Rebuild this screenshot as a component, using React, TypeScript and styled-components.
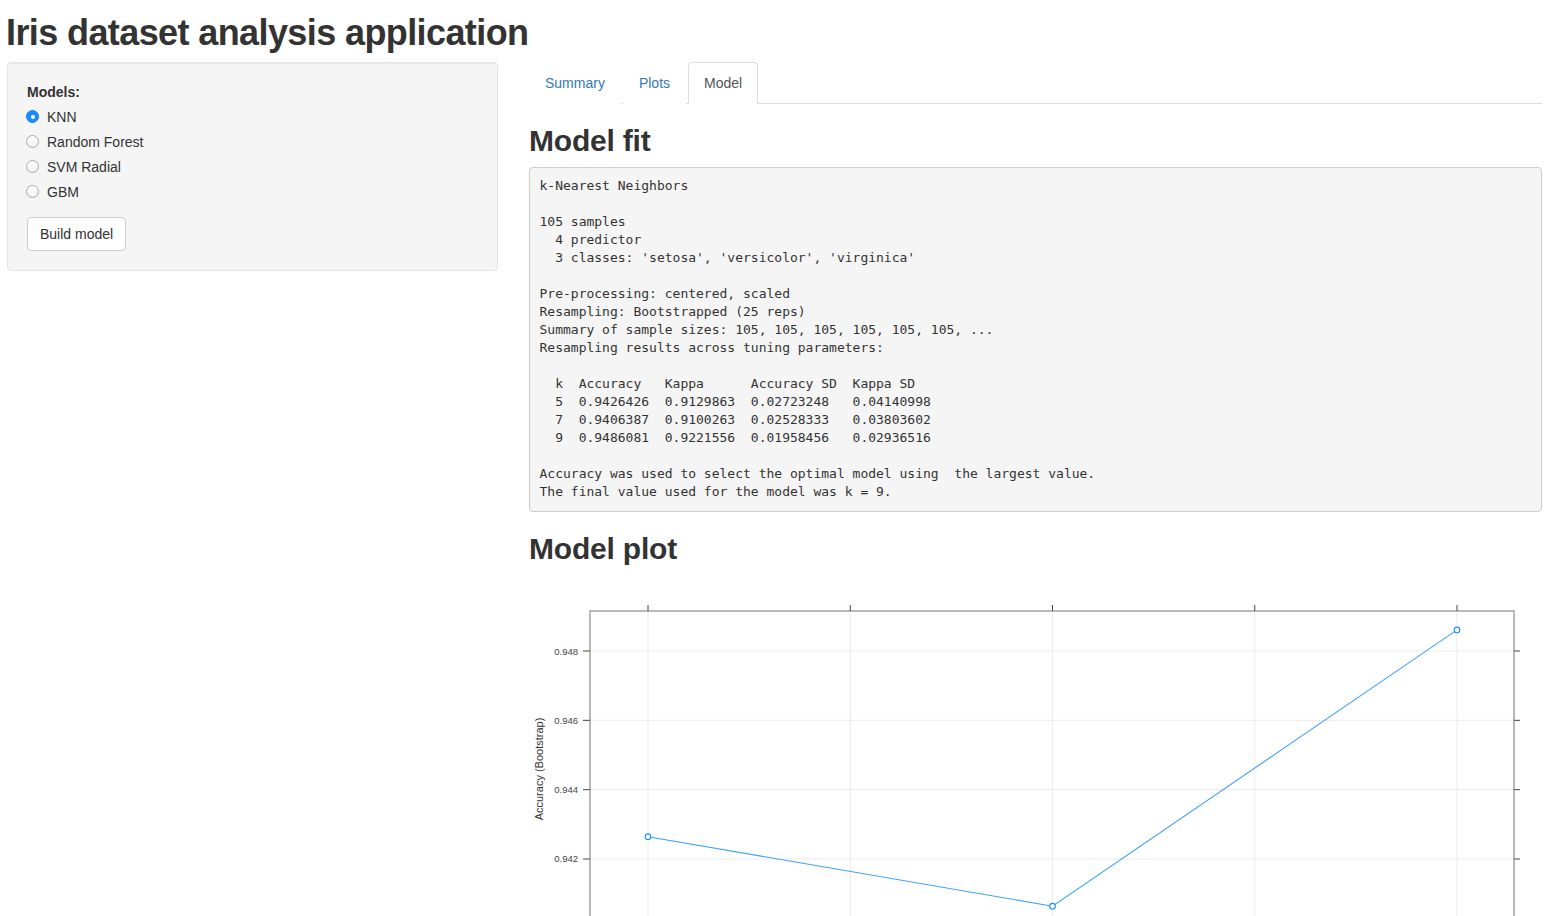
import styled, { createGlobalStyle } from 'styled-components'

const GlobalStyle = createGlobalStyle`
  html, body { margin: 0; padding: 0; background: #fff; }
  body {
    font-family: "Liberation Sans", Arial, sans-serif;
    font-size: 14px;
    line-height: 1.42857;
    color: #333;
  }
  * { box-sizing: border-box; }
`

const models = ['KNN', 'Random Forest', 'SVM Radial', 'GBM']
const tabs = ['Summary', 'Plots', 'Model']

const fitText = `k-Nearest Neighbors

105 samples
  4 predictor
  3 classes: 'setosa', 'versicolor', 'virginica'

Pre-processing: centered, scaled
Resampling: Bootstrapped (25 reps)
Summary of sample sizes: 105, 105, 105, 105, 105, 105, ...
Resampling results across tuning parameters:

  k  Accuracy   Kappa      Accuracy SD  Kappa SD  
  5  0.9426426  0.9129863  0.02723248   0.04140998
  7  0.9406387  0.9100263  0.02528333   0.03803602
  9  0.9486081  0.9221556  0.01958456   0.02936516

Accuracy was used to select the optimal model using  the largest value.
The final value used for the model was k = 9.`

// plot geometry (svg coords), lattice-like panel
const frame = { left: 61, top: 36, right: 985, bottom: 352 }
const xTicks = [5, 6, 7, 8, 9].map((k, i) => ({ k, x: 119 + i * 202.25 }))
const yTicks = [0.948, 0.946, 0.944, 0.942]
const yOf = (v: number) => 76 + ((0.948 - v) / 0.002) * 69.33
const xOf = (k: number) => 119 + (k - 5) * 202.25
const points = [
  { k: 5, acc: 0.9426426 },
  { k: 7, acc: 0.9406387 },
  { k: 9, acc: 0.9486081 },
]

function ModelPlot() {
  const line = points.map(p => `${xOf(p.k)},${yOf(p.acc)}`).join(' ')
  return (
    <PlotSvg width={1013} height={400} viewBox="0 0 1013 400">
      {xTicks.map(t => (
        <line key={'gx' + t.k} x1={t.x} x2={t.x} y1={frame.top} y2={frame.bottom} stroke="#ebebeb" strokeWidth={1} />
      ))}
      {yTicks.map(v => (
        <line key={'gy' + v} x1={frame.left} x2={frame.right} y1={yOf(v)} y2={yOf(v)} stroke="#ebebeb" strokeWidth={1} />
      ))}
      <rect
        x={frame.left}
        y={frame.top}
        width={frame.right - frame.left}
        height={frame.bottom - frame.top}
        fill="none"
        stroke="#a8a8a8"
        strokeWidth={1.6}
      />
      {xTicks.map(t => (
        <g key={'tx' + t.k}>
          <line x1={t.x} x2={t.x} y1={frame.top - 6} y2={frame.top} stroke="#444" strokeWidth={1} />
          <line x1={t.x} x2={t.x} y1={frame.bottom} y2={frame.bottom + 6} stroke="#444" strokeWidth={1} />
        </g>
      ))}
      {yTicks.map(v => (
        <g key={'ty' + v}>
          <line x1={frame.left - 7} x2={frame.left} y1={yOf(v)} y2={yOf(v)} stroke="#444" strokeWidth={1} />
          <line x1={frame.right} x2={frame.right + 6} y1={yOf(v)} y2={yOf(v)} stroke="#444" strokeWidth={1} />
          <TickLabel x={frame.left - 12} y={yOf(v) + 3.5} textAnchor="end">{v.toFixed(3)}</TickLabel>
        </g>
      ))}
      <AxisLabel x={0} y={0} transform="translate(14 194) rotate(-90)" textAnchor="middle">
        Accuracy (Bootstrap)
      </AxisLabel>
      <polyline points={line} fill="none" stroke="#3ea2ff" strokeWidth={1.1} />
      {points.map(p => (
        <circle key={p.k} cx={xOf(p.k)} cy={yOf(p.acc)} r={2.8} fill="#fff" stroke="#1a8cff" strokeWidth={1.1} />
      ))}
    </PlotSvg>
  )
}

export default function App() {
  return (
    <>
      <GlobalStyle />
      <Page>
        <Title>Iris dataset analysis application</Title>
        <Row>
          <Sidebar>
            <Well>
              <GroupLabel>Models:</GroupLabel>
              <Options>
                {models.map((m, i) => (
                  <RadioRow key={m}>
                    <RadioDot checked={i === 0} />
                    <span>{m}</span>
                  </RadioRow>
                ))}
              </Options>
              <Button>Build model</Button>
            </Well>
          </Sidebar>
          <Main>
            <Tabs>
              {tabs.map(t => (
                <Tab key={t} active={t === 'Model'}>{t}</Tab>
              ))}
            </Tabs>
            <Heading>Model fit</Heading>
            <Pre>{fitText}</Pre>
            <Heading>Model plot</Heading>
            <ModelPlot />
          </Main>
        </Row>
      </Page>
    </>
  )
}

const Page = styled.div`
  padding: 13px 8px 0 7px;
`

const Title = styled.h1`
  margin: 0 0 9px -1px;
  font-size: 36px;
  font-weight: 700;
  letter-spacing: -0.6px;
  line-height: 1.1;
  color: #333;
`

const Row = styled.div`
  display: flex;
  align-items: flex-start;
  gap: 31px;
`

const Sidebar = styled.div`
  width: 491px;
  flex: none;
`

const Well = styled.div`
  background: #f5f5f5;
  border: 1px solid #e3e3e3;
  border-radius: 4px;
  box-shadow: inset 0 1px 1px rgba(0, 0, 0, 0.05);
  padding: 19px;
`

const GroupLabel = styled.div`
  font-weight: 700;
  line-height: 20px;
  margin-bottom: 5px;
`

const Options = styled.div`
  display: flex;
  flex-direction: column;
  gap: 5px;
  margin-bottom: 15px;
`

const RadioRow = styled.label`
  display: flex;
  align-items: center;
  gap: 8px;
  height: 20px;
  margin-left: -1px;
  line-height: 20px;
`

const RadioDot = styled.span<{ checked?: boolean }>`
  position: relative;
  width: 13px;
  height: 13px;
  border-radius: 50%;
  flex: none;
  background: ${p => (p.checked ? '#1a8cff' : 'linear-gradient(#ffffff, #f0f0f0)')};
  border: 1px solid ${p => (p.checked ? '#1582f0' : '#a9a9a9')};

  &::after {
    content: '';
    display: ${p => (p.checked ? 'block' : 'none')};
    position: absolute;
    left: 50%;
    top: 50%;
    width: 4px;
    height: 4px;
    margin: -2px 0 0 -2px;
    border-radius: 50%;
    background: #fff;
  }
`

const Button = styled.button`
  display: inline-block;
  font-family: inherit;
  font-size: 14px;
  line-height: 20px;
  color: #333;
  background: #fff;
  border: 1px solid #ccc;
  border-radius: 4px;
  padding: 6px 12px;
  cursor: pointer;
`

const Main = styled.div`
  width: 1013px;
  flex: none;
`

const Tabs = styled.div`
  display: flex;
  border-bottom: 1px solid #ddd;
`

const Tab = styled.a<{ active?: boolean }>`
  display: block;
  margin-right: 2px;
  margin-bottom: -1px;
  padding: 10px 15px;
  line-height: 20px;
  border: 1px solid ${p => (p.active ? '#ddd' : 'transparent')};
  border-bottom-color: ${p => (p.active ? '#fff' : 'transparent')};
  border-radius: 4px 4px 0 0;
  background: #fff;
  color: ${p => (p.active ? '#555' : '#337ab7')};
  cursor: pointer;
`

const Heading = styled.h2`
  margin: 20px 0 10px;
  font-size: 30px;
  font-weight: 700;
  letter-spacing: -0.2px;
  line-height: 1.1;
  color: #333;
`

const Pre = styled.pre`
  margin: 0 0 10px;
  padding: 9.5px;
  font-family: "DejaVu Sans Mono", "Liberation Mono", monospace;
  font-size: 13px;
  line-height: 18px;
  color: #333;
  background: #f5f5f5;
  border: 1px solid #ccc;
  border-radius: 4px;
  white-space: pre;
  overflow: hidden;
`

const PlotSvg = styled.svg`
  display: block;
`

const TickLabel = styled.text`
  font-family: "Liberation Sans", Arial, sans-serif;
  font-size: 9.5px;
  fill: #444;
`

const AxisLabel = styled.text`
  font-family: "Liberation Sans", Arial, sans-serif;
  font-size: 11px;
  fill: #333;
`
